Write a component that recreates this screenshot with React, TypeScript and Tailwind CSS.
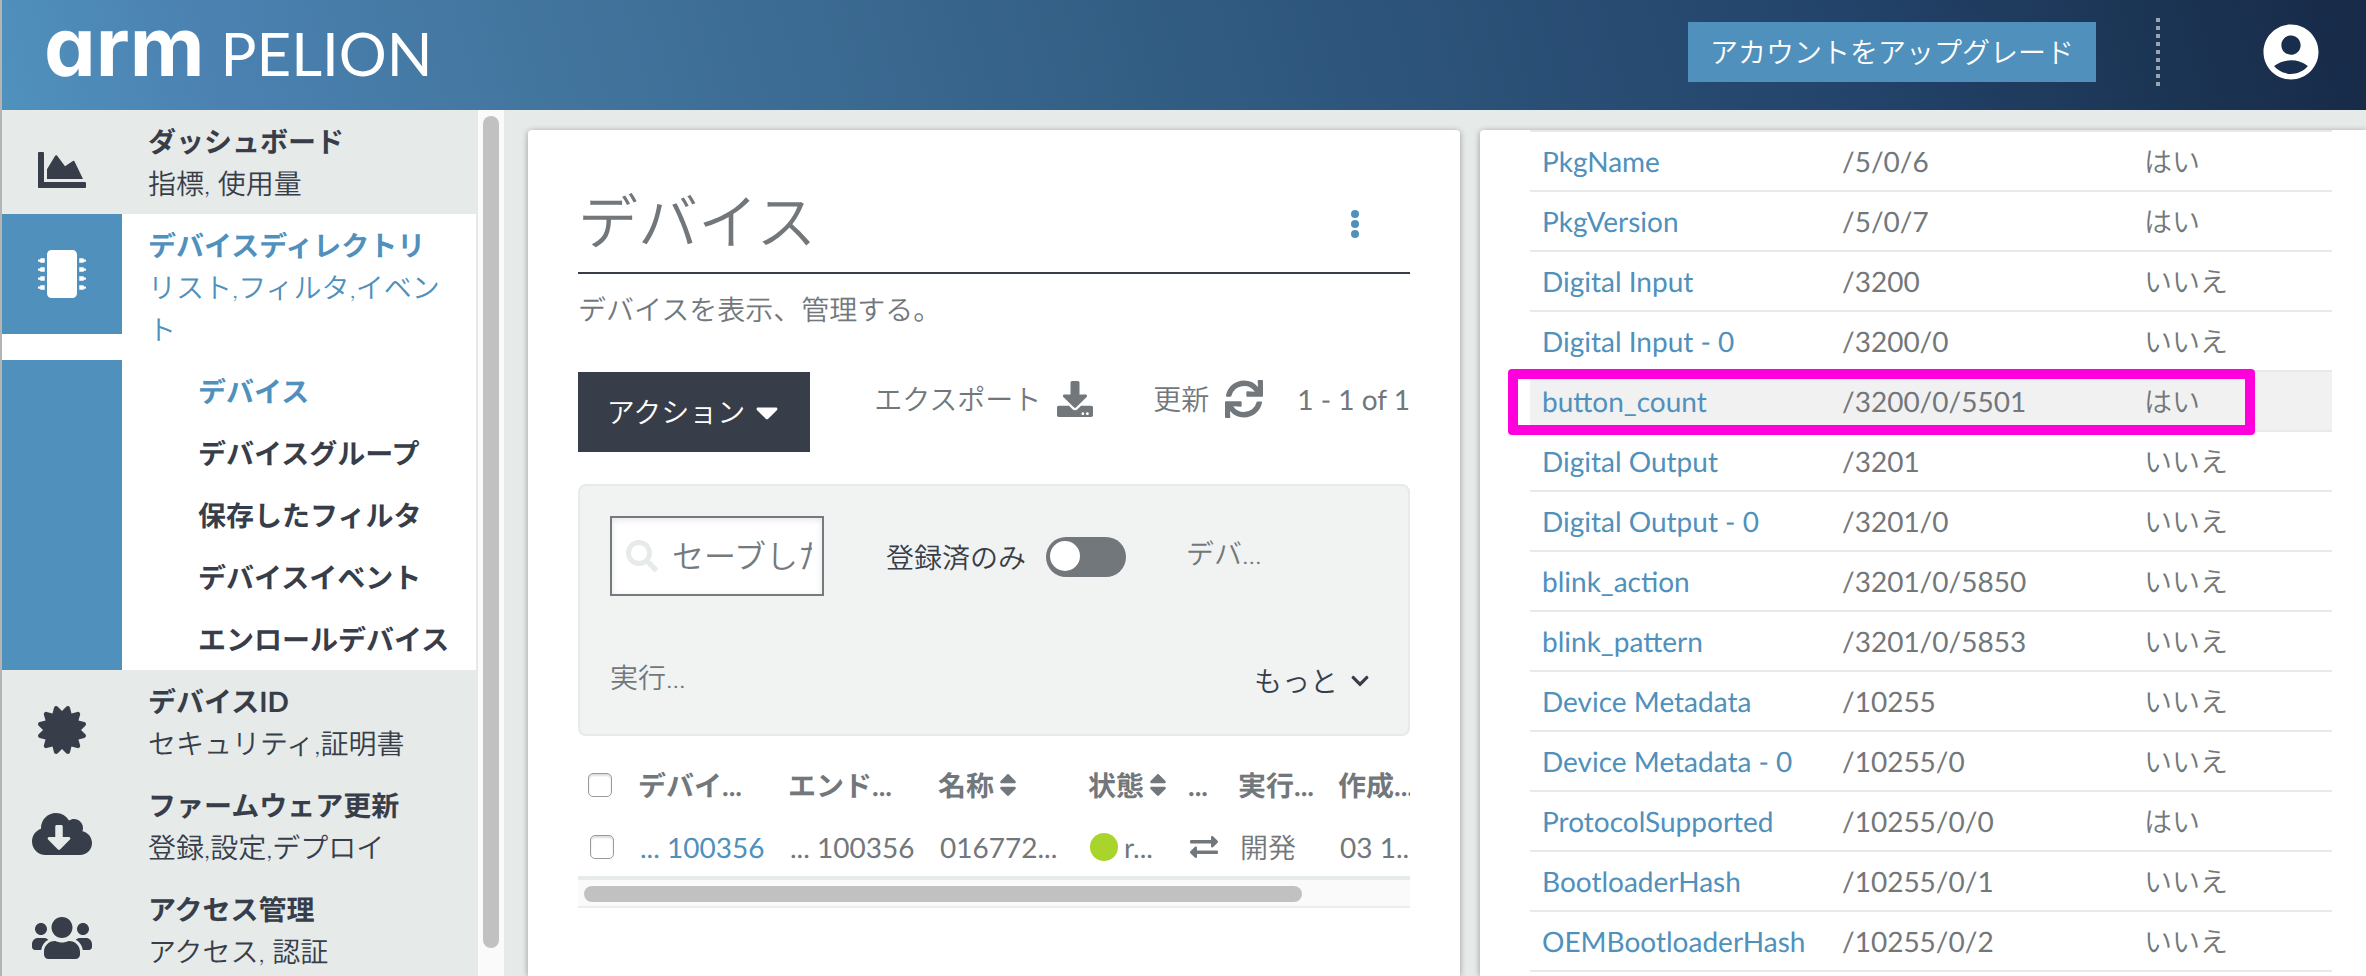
import type { ReactNode } from "react";
import {
  FaChartArea,
  FaMicrochip,
  FaCertificate,
  FaCloudDownloadAlt,
  FaUsers,
  FaDownload,
  FaSync,
  FaSearch,
  FaChevronDown,
  FaSort,
  FaExchangeAlt,
  FaCaretDown,
} from "react-icons/fa";
import { MdAccountCircle } from "react-icons/md";

const subItems = [
  "デバイス",
  "デバイスグループ",
  "保存したフィルタ",
  "デバイスイベント",
  "エンロールデバイス",
];

const resources: [string, string, string][] = [
  ["PkgName", "/5/0/6", "はい"],
  ["PkgVersion", "/5/0/7", "はい"],
  ["Digital Input", "/3200", "いいえ"],
  ["Digital Input - 0", "/3200/0", "いいえ"],
  ["button_count", "/3200/0/5501", "はい"],
  ["Digital Output", "/3201", "いいえ"],
  ["Digital Output - 0", "/3201/0", "いいえ"],
  ["blink_action", "/3201/0/5850", "いいえ"],
  ["blink_pattern", "/3201/0/5853", "いいえ"],
  ["Device Metadata", "/10255", "いいえ"],
  ["Device Metadata - 0", "/10255/0", "いいえ"],
  ["ProtocolSupported", "/10255/0/0", "はい"],
  ["BootloaderHash", "/10255/0/1", "いいえ"],
  ["OEMBootloaderHash", "/10255/0/2", "いいえ"],
];

function Header() {
  return (
    <header className="flex h-[110px] shrink-0 items-center bg-[linear-gradient(75deg,#5091bd_0%,#4b82b2_9%,#43769f_22%,#315b81_51%,#23436a_78%,#1a3250_93%,#172a48_100%)] pr-[42px] pl-[42px] text-white">
      <a href="#home" className="mb-2.5 flex items-baseline gap-4 leading-none">
        <span className="font-[Inter] text-[82px] leading-[80px] font-bold [font-feature-settings:'cv11']">arm</span>
        <span className="text-[60px] leading-[80px]">PELION</span>
      </a>
      <button type="button" className="mb-1.5 ml-auto h-[60px] bg-[#5090bc] px-[22px] font-[350]">
        アカウントをアップグレード
      </button>
      <span className="mb-1.5 ml-[60px] h-[68px] w-1 bg-[repeating-linear-gradient(to_bottom,#98a5b5_0,#98a5b5_4px,transparent_4px,transparent_8px)]" />
      <button type="button" aria-label="アカウント" className="mb-1.5 ml-[98px]">
        <MdAccountCircle className="size-[66px]" />
      </button>
    </header>
  );
}

function NavItem({ icon, title, sub }: { icon: ReactNode; title: string; sub: string }) {
  return (
    <a href="#section" className="flex h-[104px]">
      <span className="flex size-[120px] shrink-0 items-center justify-center">{icon}</span>
      <span className="flex flex-col py-2.5 pl-[26px]">
        <span className="font-bold">{title}</span>
        <span className="font-[350]">{sub}</span>
      </span>
    </a>
  );
}

function Sidebar() {
  return (
    <nav className="flex w-[504px] shrink-0 overflow-hidden text-[#373e49]">
      <div className="w-[474px] shrink-0">
        <NavItem icon={<FaChartArea className="size-12" />} title="ダッシュボード" sub="指標, 使用量" />
        <div className="bg-white">
          <a href="#directory" className="flex text-[#5090bc]">
            <span className="flex size-[120px] shrink-0 items-center justify-center bg-[#5090bc] text-white">
              <FaMicrochip className="size-12" />
            </span>
            <span className="flex flex-col py-2.5 pr-8 pl-[26px]">
              <span className="font-bold">デバイスディレクトリ</span>
              <span className="font-[350] break-all">リスト,フィルタ,イベント</span>
            </span>
          </a>
          <ul className="border-l-[120px] border-[#5090bc] pl-[76px] leading-[62px] font-bold">
            {subItems.map((s, i) => (
              <li key={s}>
                <a href="#item" className={i === 0 ? "text-[#5090bc]" : ""}>
                  {s}
                </a>
              </li>
            ))}
          </ul>
        </div>
        <NavItem icon={<FaCertificate className="size-12" />} title="デバイスID" sub="セキュリティ,証明書" />
        <NavItem icon={<FaCloudDownloadAlt className="size-[60px]" />} title="ファームウェア更新" sub="登録,設定,デプロイ" />
        <NavItem icon={<FaUsers className="size-[60px]" />} title="アクセス管理" sub="アクセス, 認証" />
      </div>
      <div className="flex w-[30px] justify-center border-x-2 border-[#e8e8e8] bg-[#fafafa] pt-1.5 pb-7">
        <div className="w-4 rounded-full bg-[#c1c1c1]" />
      </div>
    </nav>
  );
}

const checkbox =
  "block size-6 appearance-none rounded-[5px] border border-[#9a9a9a] bg-white shadow-[inset_0_2px_2px_#dddddd]";

function Devices() {
  return (
    <section className="min-w-0 rounded-t-sm bg-white px-[50px] pt-[50px] shadow-[0_1px_6px_rgba(0,0,0,0.35)]">
      <div className="flex h-[94px] items-center justify-between border-b-2 border-[#373e49] pr-[51px] pb-1">
        <h1 className="pb-1.5 text-[60px] leading-[80px] font-[350]">デバイス</h1>
        <button type="button" aria-label="メニュー" className="flex flex-col gap-0.5">
          <span className="size-2 rounded-full bg-[#5090bc]" />
          <span className="size-2 rounded-full bg-[#5090bc]" />
          <span className="size-2 rounded-full bg-[#5090bc]" />
        </button>
      </div>
      <p className="mt-3.5 font-[350]">デバイスを表示、管理する。</p>
      <div className="mt-[42px] flex h-20 justify-between">
        <button type="button" className="flex h-20 w-[232px] items-center justify-center gap-1 bg-[#373e49] pl-1 font-[350] text-white">
          アクション
          <FaCaretDown className="size-9" />
        </button>
        <div className="flex items-start pt-1.5">
          <button type="button" className="flex items-center gap-4 font-[350]">
            エクスポート
            <FaDownload className="size-9" />
          </button>
          <button type="button" className="ml-[60px] flex items-center gap-4 font-[350]">
            更新
            <FaSync className="size-[38px]" />
          </button>
          <span className="ml-[34px]">1 - 1 of 1</span>
        </div>
      </div>
      <div className="mt-8 h-[252px] rounded-lg border-2 border-[#e6eae9] bg-[#f1f3f3] px-[30px] pt-[30px]">
        <div className="flex">
          <label className="flex h-20 w-[214px] shrink-0 items-center border-2 border-[#757a7f] bg-white pr-2.5 pl-3.5 shadow-[inset_0_2px_6px_#e8e4e8]">
            <FaSearch className="size-8 shrink-0 text-[#e6eae8]" />
            <input
              type="text"
              aria-label="フィルタ"
              placeholder="セーブした"
              className="ml-3.5 w-full min-w-0 text-[32px] font-[350] outline-none placeholder:text-[#757a7f]"
            />
          </label>
          <label className="mt-0.5 ml-[62px] flex items-center gap-5 font-[350] text-[#373e49]">
            登録済のみ
            <input
              type="checkbox"
              role="switch"
              className="h-10 w-20 appearance-none rounded-full bg-[#72777b] p-1 before:block before:size-[30px] before:rounded-full before:bg-white"
            />
          </label>
          <span className="mt-4 ml-[60px] font-[350]">デバ...</span>
        </div>
        <div className="mt-[60px] flex justify-between pr-2 font-[350]">
          <span>実行...</span>
          <button type="button" className="mt-1 flex items-center gap-3 text-[#373e49]">
            もっと
            <FaChevronDown className="size-5" />
          </button>
        </div>
      </div>
      <div className="mt-[18px] overflow-hidden">
        <table className="w-full table-fixed text-left whitespace-nowrap">
          <colgroup>
            <col className="w-[60px]" />
            <col className="w-[150px]" />
            <col className="w-[150px]" />
            <col className="w-[150px]" />
            <col className="w-[100px]" />
            <col className="w-[50px]" />
            <col className="w-[100px]" />
            <col />
          </colgroup>
          <thead>
            <tr className="h-[62px] font-bold">
              <th className="pl-2.5">
                <input type="checkbox" aria-label="すべて選択" className={checkbox} />
              </th>
              <th>デバイ...</th>
              <th>エンド...</th>
              <th>
                <span className="flex items-center">
                  名称
                  <FaSort className="size-7" />
                </span>
              </th>
              <th>
                <span className="flex items-center">
                  状態
                  <FaSort className="size-7" />
                </span>
              </th>
              <th>...</th>
              <th>実行...</th>
              <th className="overflow-hidden">作成...</th>
            </tr>
          </thead>
          <tbody>
            <tr className="h-[62px] border-b-4 border-[#e6eae9] *:pt-0.5 *:pl-0.5">
              <td>
                <input type="checkbox" aria-label="選択" className={`${checkbox} ml-2.5`} />
              </td>
              <td>
                <a href="#device" className="text-[#5090bc]">... 100356</a>
              </td>
              <td>... 100356</td>
              <td>016772...</td>
              <td>
                <span className="flex items-center gap-1.5">
                  <span className="size-7 rounded-full bg-[#a9d42c]" />
                  r...
                </span>
              </td>
              <td>
                <FaExchangeAlt className="size-7" />
              </td>
              <td className="font-[350]">開発</td>
              <td className="overflow-hidden">03 1...</td>
            </tr>
          </tbody>
        </table>
        <div className="h-7 border-b-2 border-[#ececec] bg-[#fafafa] px-1.5 pt-1.5">
          <div className="h-4 w-7/8 rounded-full bg-[#c1c1c1]" />
        </div>
      </div>
    </section>
  );
}

function Resources() {
  return (
    <section className="min-w-0 rounded-tl-sm bg-white pr-[34px] pl-[50px] shadow-[0_1px_6px_rgba(0,0,0,0.35)]">
      <table className="w-full table-fixed text-left">
        <colgroup>
          <col className="w-[300px]" />
          <col className="w-[302px]" />
          <col />
        </colgroup>
        <tbody>
          {resources.map(([name, path, observable]) => {
            const marked = name === "button_count";
            return (
              <tr
                key={name}
                className={
                  marked
                    ? "h-[60px] border-y-2 border-[#e6eae9] bg-[#f1f1f1]"
                    : "h-[60px] border-y-2 border-[#e6eae9]"
                }
              >
                <td className={marked ? "relative px-3" : "px-3"}>
                  <a href="#resource" className="whitespace-nowrap text-[#5090bc]">{name}</a>
                  {marked && (
                    <span className="pointer-events-none absolute -top-[3px] -left-[22px] h-[66px] w-[747px] rounded-sm border-10 border-[#ff00dd]" />
                  )}
                </td>
                <td className="px-3">{path}</td>
                <td className="px-3 font-[350]">{observable}</td>
              </tr>
            );
          })}
        </tbody>
      </table>
    </section>
  );
}

export default function App() {
  return (
    <div className="flex h-screen flex-col overflow-hidden border-l-2 border-[#b4b4b4] bg-[#e6eae9] font-[Lato,'Noto_Sans_CJK_JP',sans-serif] text-[28px] leading-[42px] text-[#72777b] [text-rendering:geometricPrecision]">
      <Header />
      <div className="flex min-h-0 flex-1">
        <Sidebar />
        <main className="grid min-w-0 flex-1 grid-cols-[932fr_886fr] gap-5 overflow-hidden pt-5 pl-[22px]">
          <Devices />
          <Resources />
        </main>
      </div>
    </div>
  );
}
